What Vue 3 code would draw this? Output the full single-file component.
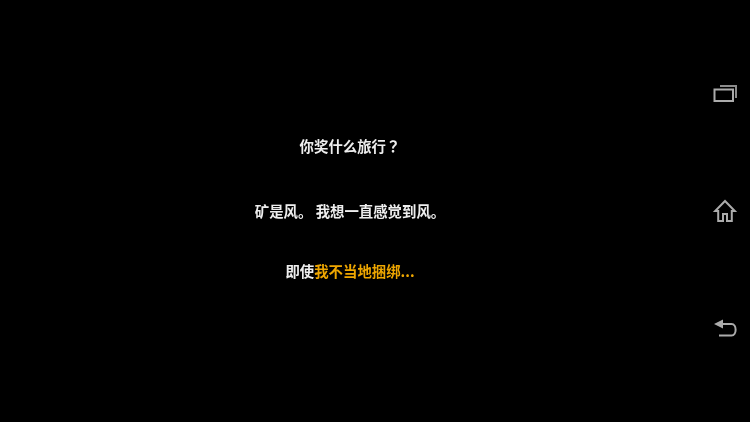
<script setup>
const first = '你奖什么旅行'
const second = '矿是风。 我想一直感觉到风。'
</script>

<template>
  <div class="screen">
    <main class="dialog">
      <p class="line first">{{ first }}<span class="mark">？</span></p>
      <p class="line second">{{ second }}</p>
      <p class="line third">即使<span class="gold">我不当地捆绑...</span></p>
    </main>
    <nav class="nav">
      <svg class="icon" viewBox="0 0 26 26" aria-label="recent">
        <path class="dim" d="M8 5H24V17" />
        <rect x="2.5" y="8.5" width="18.5" height="11.5" />
      </svg>
      <svg class="icon" viewBox="0 0 26 26" aria-label="home">
        <path d="M13 4 L3.2 14 L6.2 14 V24 H11 V17 H15 V24 H19.8 V14 L22.8 14 Z" />
      </svg>
      <svg class="icon" viewBox="0 0 26 26" aria-label="back">
        <path d="M10 11H19.5C25 11 25 22.5 19.5 22.5H7" />
        <path class="solid" d="M2 11 L11 6.5 V15.5 Z" />
      </svg>
    </nav>
  </div>
</template>

<style>
html, body { margin: 0; background: #000; }
</style>

<style scoped>
.screen {
  width: 750px;
  height: 422px;
  display: flex;
  background: #000;
  overflow: hidden;
}
.dialog {
  width: 700px;
  display: flex;
  flex-direction: column;
  align-items: center;
  padding-top: 136px;
  box-sizing: border-box;
  font-family: "Noto Sans CJK SC", "Liberation Sans", sans-serif;
  font-size: 14.4px;
  font-weight: 700;
  line-height: 20px;
  color: #eeeeee;
  filter: blur(0.5px);
}
.line { margin: 0; white-space: pre; }
.mark { font-family: "Noto Sans CJK TC", sans-serif; }
.second { margin-top: 45px; }
.third { margin-top: 40px; }
.gold { color: #eea600; }
.nav {
  width: 50px;
  display: flex;
  flex-direction: column;
  align-items: center;
  gap: 90px;
  padding-top: 81px;
  box-sizing: border-box;
  filter: blur(0.6px);
}
.icon {
  width: 26px;
  height: 26px;
  fill: none;
  stroke: #ababab;
  stroke-width: 2;
}
.dim { stroke: #8c8c8c; }
.solid { fill: #ababab; stroke: none; }
</style>
